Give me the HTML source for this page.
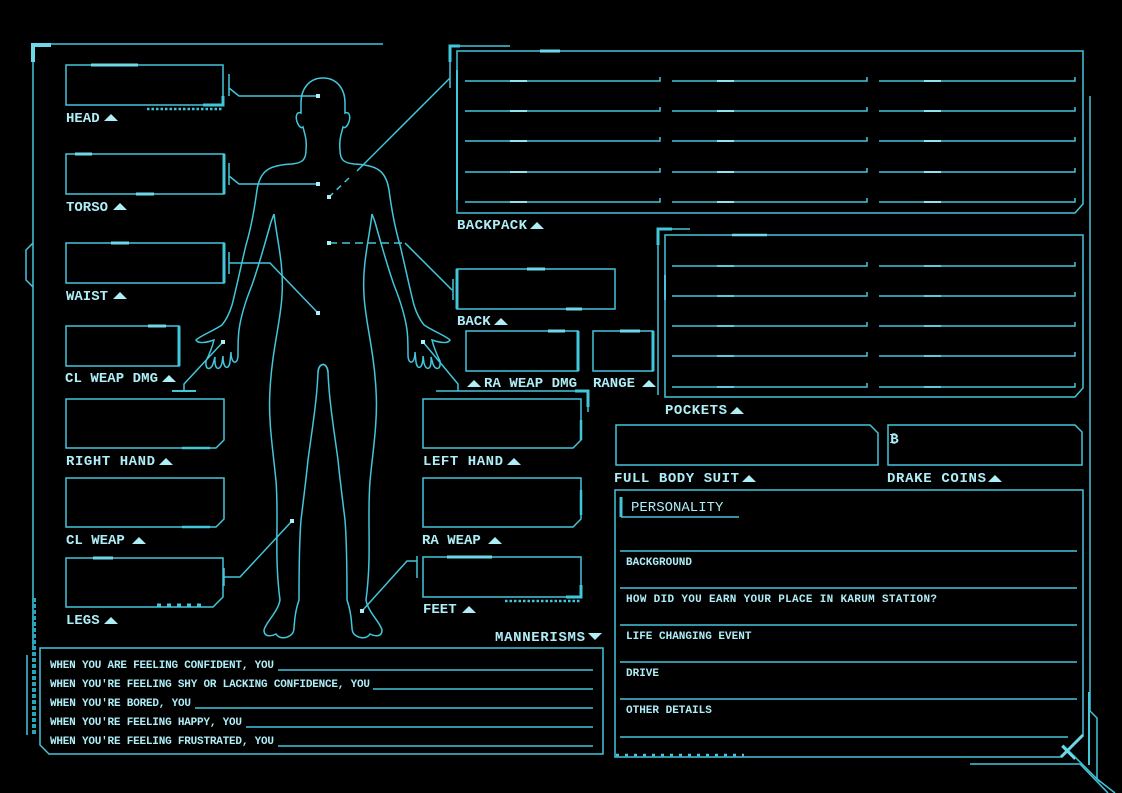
<!DOCTYPE html>
<html><head><meta charset="utf-8"><style>
html,body{margin:0;padding:0;background:#000;}
svg{display:block}
text{font-family:"Liberation Mono",monospace;fill:#aeeef7}
</style></head><body>
<svg width="1122" height="793" viewBox="0 0 1122 793" xmlns="http://www.w3.org/2000/svg">
<defs>
<g id="tri"><path d="M0,0 L7,-7 L14,0 Z" fill="#aeeef7"/></g>
</defs>
<g fill="none" stroke="#42c6da" stroke-width="1.5">
<path d="M33,650 L33,44 L383,44"/>
<path d="M33,62 L33,45 L51,45" stroke-width="4" stroke="#6fd8e8"/>
<path d="M33,243 L26,250 L26,280 L33,287"/>
<rect x="66" y="65" width="157" height="40"/>
<path d="M91,65 H138" stroke-width="3" stroke="#6fd8e8"/>
<path d="M223,96 V105 H203" stroke-width="3"/>
<path d="M147,109 H222" stroke-width="2.5" stroke-dasharray="2.5,2"/>
<path d="M229,74 V96 M229,88 L239,96 H318"/>
<rect x="66" y="154" width="158" height="40"/>
<path d="M224,154 V194" stroke-width="3"/>
<path d="M75,154 H92 M136,194 H154" stroke-width="3" stroke="#6fd8e8"/>
<path d="M229,163 V185 M229,176 L239,184 H318"/>
<rect x="66" y="243" width="158" height="40"/>
<path d="M224,243 V283" stroke-width="3"/>
<path d="M111,243 H129" stroke-width="3" stroke="#6fd8e8"/>
<path d="M229,252 V274 M229,263 H270 L318,313"/>
<rect x="66" y="326" width="113" height="40"/>
<path d="M179,326 V366" stroke-width="3"/>
<path d="M148,326 H166" stroke-width="3" stroke="#6fd8e8"/>
<path d="M223,342 L184,384 V391"/>
<path d="M172,391 H196" stroke-width="2"/>
<path d="M66,399 H224 V440 L216,448 H66 Z"/>
<path d="M182,448 H210" stroke-width="2.5"/>
<path d="M66,478 H224 V519 L216,527 H66 Z"/>
<path d="M182,527 H210" stroke-width="2.5"/>
<path d="M66,558 H223 V597 L213,607 H66 Z"/>
<path d="M93,558 H113" stroke-width="3" stroke="#6fd8e8"/>
<path d="M157,605 H205" stroke-width="3" stroke-dasharray="4,6"/>
<path d="M224,568 V586 M224,577 H240 L292,521"/>
<path d="M423,399 H581 V440 L573,448 H423 Z"/>
<path d="M581,420 V440" stroke-width="2.5"/>
<path d="M436,391 H588 V412"/>
<path d="M575,391 H588 V407" stroke-width="3"/>
<path d="M423,342 L458,384 V391"/>
<path d="M423,478 H581 V519 L573,527 H423 Z"/>
<path d="M581,490 V515" stroke-width="2.5"/>
<rect x="423" y="557" width="158" height="40"/>
<path d="M447,557 H492" stroke-width="3" stroke="#6fd8e8"/>
<path d="M581,585 V597 H566" stroke-width="3"/>
<path d="M505,601 H580" stroke-width="2.5" stroke-dasharray="2.5,2"/>
<path d="M417,556 V578 M417,561 H407 L362,611"/>
<rect x="457" y="269" width="158" height="40"/>
<path d="M457,269 V309" stroke-width="3"/>
<path d="M527,269 H545 M566,309 H582" stroke-width="3" stroke="#6fd8e8"/>
<path d="M453,279 V300 M452,290 L405,243"/>
<path d="M329,243 H405" stroke-dasharray="8,5"/>
<rect x="466" y="331" width="112" height="40"/>
<path d="M578,331 V371" stroke-width="3"/>
<path d="M548,331 H565" stroke-width="3" stroke="#6fd8e8"/>
<rect x="593" y="331" width="60" height="40"/>
<path d="M653,331 V371" stroke-width="3"/>
<path d="M620,331 H640" stroke-width="3" stroke="#6fd8e8"/>
<path d="M450,88 V46 H510"/>
<path d="M450,62 V46 H460" stroke-width="3"/>
<path d="M457,51 H1083 V204 L1075,213 H457 Z"/>
<path d="M540,51 H560" stroke-width="3" stroke="#6fd8e8"/>
<path d="M450,78 L357,171"/>
<path d="M349,178 L329,197" stroke-dasharray="6,5"/>
<path d="M457,70 V200" stroke-width="2"/>
<path d="M465,81 H660 V77 M672,81 H867 V77 M879,81 H1075 V77"/>
<path d="M465,111 H660 V107 M672,111 H867 V107 M879,111 H1075 V107"/>
<path d="M465,141 H660 V137 M672,141 H867 V137 M879,141 H1075 V137"/>
<path d="M465,172 H660 V168 M672,172 H867 V168 M879,172 H1075 V168"/>
<path d="M465,202 H660 V198 M672,202 H867 V198 M879,202 H1075 V198"/>
<g stroke="#8fe3ef" stroke-width="2">
<path d="M510,81 H527 M717,81 H734 M924,81 H941 M510,111 H527 M717,111 H734 M924,111 H941 M510,141 H527 M717,141 H734 M924,141 H941 M510,172 H527 M717,172 H734 M924,172 H941 M510,202 H527 M717,202 H734 M924,202 H941"/>
<path d="M717,266 H734 M924,266 H941 M717,296 H734 M924,296 H941 M717,326 H734 M924,326 H941 M717,356 H734 M924,356 H941 M717,387 H734 M924,387 H941"/>
</g>
<path d="M658,395 V229 H690"/>
<path d="M658,245 V229 H672" stroke-width="3"/>
<path d="M665,235 H1083 V388 L1075,397 H665 Z"/>
<path d="M732,235 H767" stroke-width="2.5" stroke="#6fd8e8"/>
<path d="M672,266 H867 V262 M879,266 H1075 V262"/>
<path d="M672,296 H867 V292 M879,296 H1075 V292"/>
<path d="M672,326 H867 V322 M879,326 H1075 V322"/>
<path d="M672,356 H867 V352 M879,356 H1075 V352"/>
<path d="M672,387 H867 V383 M879,387 H1075 V383"/>
<path d="M665,275 V300" stroke-width="2"/>
<path d="M1090,96 V711 L1097,718 V779 L1115,793"/>
<path d="M1089,692 V765" stroke-width="2"/>
<path d="M970,764 H1080 L1108,793"/>
<path d="M1063,745 L1100,782"/>
<path d="M616,425 H870 L878,433 V465 H616 Z"/>
<path d="M888,425 H1075 L1082,432 V465 H888 Z"/>
<path d="M615,490 H1083 V735 L1061,757 H615 Z"/>
<path d="M1061,757 L1083,735" stroke-width="3" stroke="#6fd8e8"/>
<path d="M1062,746 L1075,759" stroke-width="2.5" stroke="#6fd8e8"/>
<path d="M621,497 V517" stroke-width="3"/>
<path d="M621,517 H739" stroke-width="1.5"/>
<path d="M620,551 H1077 M620,588 H1077 M620,625 H1077 M620,662 H1077 M620,699 H1077 M620,737 H1068"/>
<path d="M616,755 H744" stroke-width="2.5" stroke-dasharray="3,6"/>
<path d="M40,648 H603 V754 H49 L40,745 Z"/>
<path d="M34,598 V735" stroke-width="4" stroke-dasharray="4,2" stroke="#2aa4b8"/>
<path d="M27,655 V735"/>
<path d="M278,670 H593 M373,689 H593 M195,708 H593 M246,727 H593 M278,746 H593"/>
<g id="half">
<path d="M323,78 C309,78 301,89 301,103 L301,113 C296,111 295,118 298,124 C300,128 302,128 303,127 C305,135 307,140 306,150 C306,160 302,163 292,164 C270,165 260,170 257,190 C255,205 252,225 246,245 C240,270 236,290 232,305 C229,315 226,320 222,325 C213,331 200,336 196,340 C198,344 205,343 214,340 C212,348 208,357 206,361 C205,371 211,370 213,364 L215,357 C214,371 220,371 222,363 L223,356 C223,370 229,370 230,362 L231,352 C231,365 238,365 238,355 C238,345 238,338 239,330 C241,315 246,300 252,285 C259,265 266,240 271,222 L274,214"/>
<path d="M274,214 C277,240 284,265 282,295 C281,320 272,350 270,390 C268,420 273,450 276,481 C279,520 274,555 280,600 C278,612 266,622 264,630 C264,638 272,636 276,634 C280,640 288,638 292,634 C296,630 292,620 299,600 C299,575 299,545 301,520 C304,495 306,480 308,460 C312,430 317,400 318,372 C319,362 327,362 328,372"/>
</g>
<use href="#half" transform="translate(646,0) scale(-1,1)"/>
</g>
<g fill="#aeeef7">
<rect x="316" y="94" width="4" height="4"/>
<rect x="316" y="182" width="4" height="4"/>
<rect x="316" y="311" width="4" height="4"/>
<rect x="327" y="195" width="4" height="4"/>
<rect x="327" y="241" width="4" height="4"/>
<rect x="221" y="340" width="4" height="4"/>
<rect x="421" y="340" width="4" height="4"/>
<rect x="290" y="519" width="4" height="4"/>
<rect x="360" y="609" width="4" height="4"/>
</g>
<g font-size="14" font-weight="bold">
<text x="66" y="122">HEAD</text><use href="#tri" x="104" y="121"/>
<text x="66" y="211">TORSO</text><use href="#tri" x="113" y="210"/>
<text x="66" y="300">WAIST</text><use href="#tri" x="113" y="299"/>
<text x="65" y="382" textLength="93">CL WEAP DMG</text><use href="#tri" x="162" y="382"/>
<text x="66" y="465" textLength="89">RIGHT HAND</text><use href="#tri" x="159" y="465"/>
<text x="66" y="544">CL WEAP</text><use href="#tri" x="132" y="544"/>
<text x="66" y="624">LEGS</text><use href="#tri" x="104" y="624"/>
<text x="423" y="465" textLength="80">LEFT HAND</text><use href="#tri" x="507" y="465"/>
<text x="422" y="544">RA WEAP</text><use href="#tri" x="488" y="544"/>
<text x="423" y="613">FEET</text><use href="#tri" x="462" y="613"/>
<text x="457" y="325">BACK</text><use href="#tri" x="494" y="325"/>
<use href="#tri" x="467" y="387"/><text x="484" y="387" textLength="93">RA WEAP DMG</text>
<text x="593" y="387">RANGE</text><use href="#tri" x="642" y="387"/>
<text x="457" y="229" textLength="70">BACKPACK</text><use href="#tri" x="530" y="229"/>
<text x="665" y="414" textLength="62">POCKETS</text><use href="#tri" x="730" y="414"/>
<text x="614" y="482" textLength="125">FULL BODY SUIT</text><use href="#tri" x="742" y="482"/>
<text x="887" y="482" textLength="99">DRAKE COINS</text><use href="#tri" x="988" y="482"/>
<text x="495" y="641" textLength="90">MANNERISMS</text><path d="M588,633 L595,640 L602,633 Z" fill="#aeeef7"/>
<text x="631" y="511" font-weight="normal">PERSONALITY</text>
<text x="890" y="443">₿</text>
</g>
<g font-size="11" font-weight="bold">
<text x="626" y="565">BACKGROUND</text>
<text x="626" y="602" textLength="311">HOW DID YOU EARN YOUR PLACE IN KARUM STATION?</text>
<text x="626" y="639">LIFE CHANGING EVENT</text>
<text x="626" y="676">DRIVE</text>
<text x="626" y="713">OTHER DETAILS</text>
</g>
<g font-size="11" font-weight="bold">
<text x="50" y="668" textLength="224">WHEN YOU ARE FEELING CONFIDENT, YOU</text>
<text x="50" y="687" textLength="320">WHEN YOU'RE FEELING SHY OR LACKING CONFIDENCE, YOU</text>
<text x="50" y="706" textLength="141">WHEN YOU'RE BORED, YOU</text>
<text x="50" y="725" textLength="192">WHEN YOU'RE FEELING HAPPY, YOU</text>
<text x="50" y="744" textLength="224">WHEN YOU'RE FEELING FRUSTRATED, YOU</text>
</g>
</svg>
</body></html>
